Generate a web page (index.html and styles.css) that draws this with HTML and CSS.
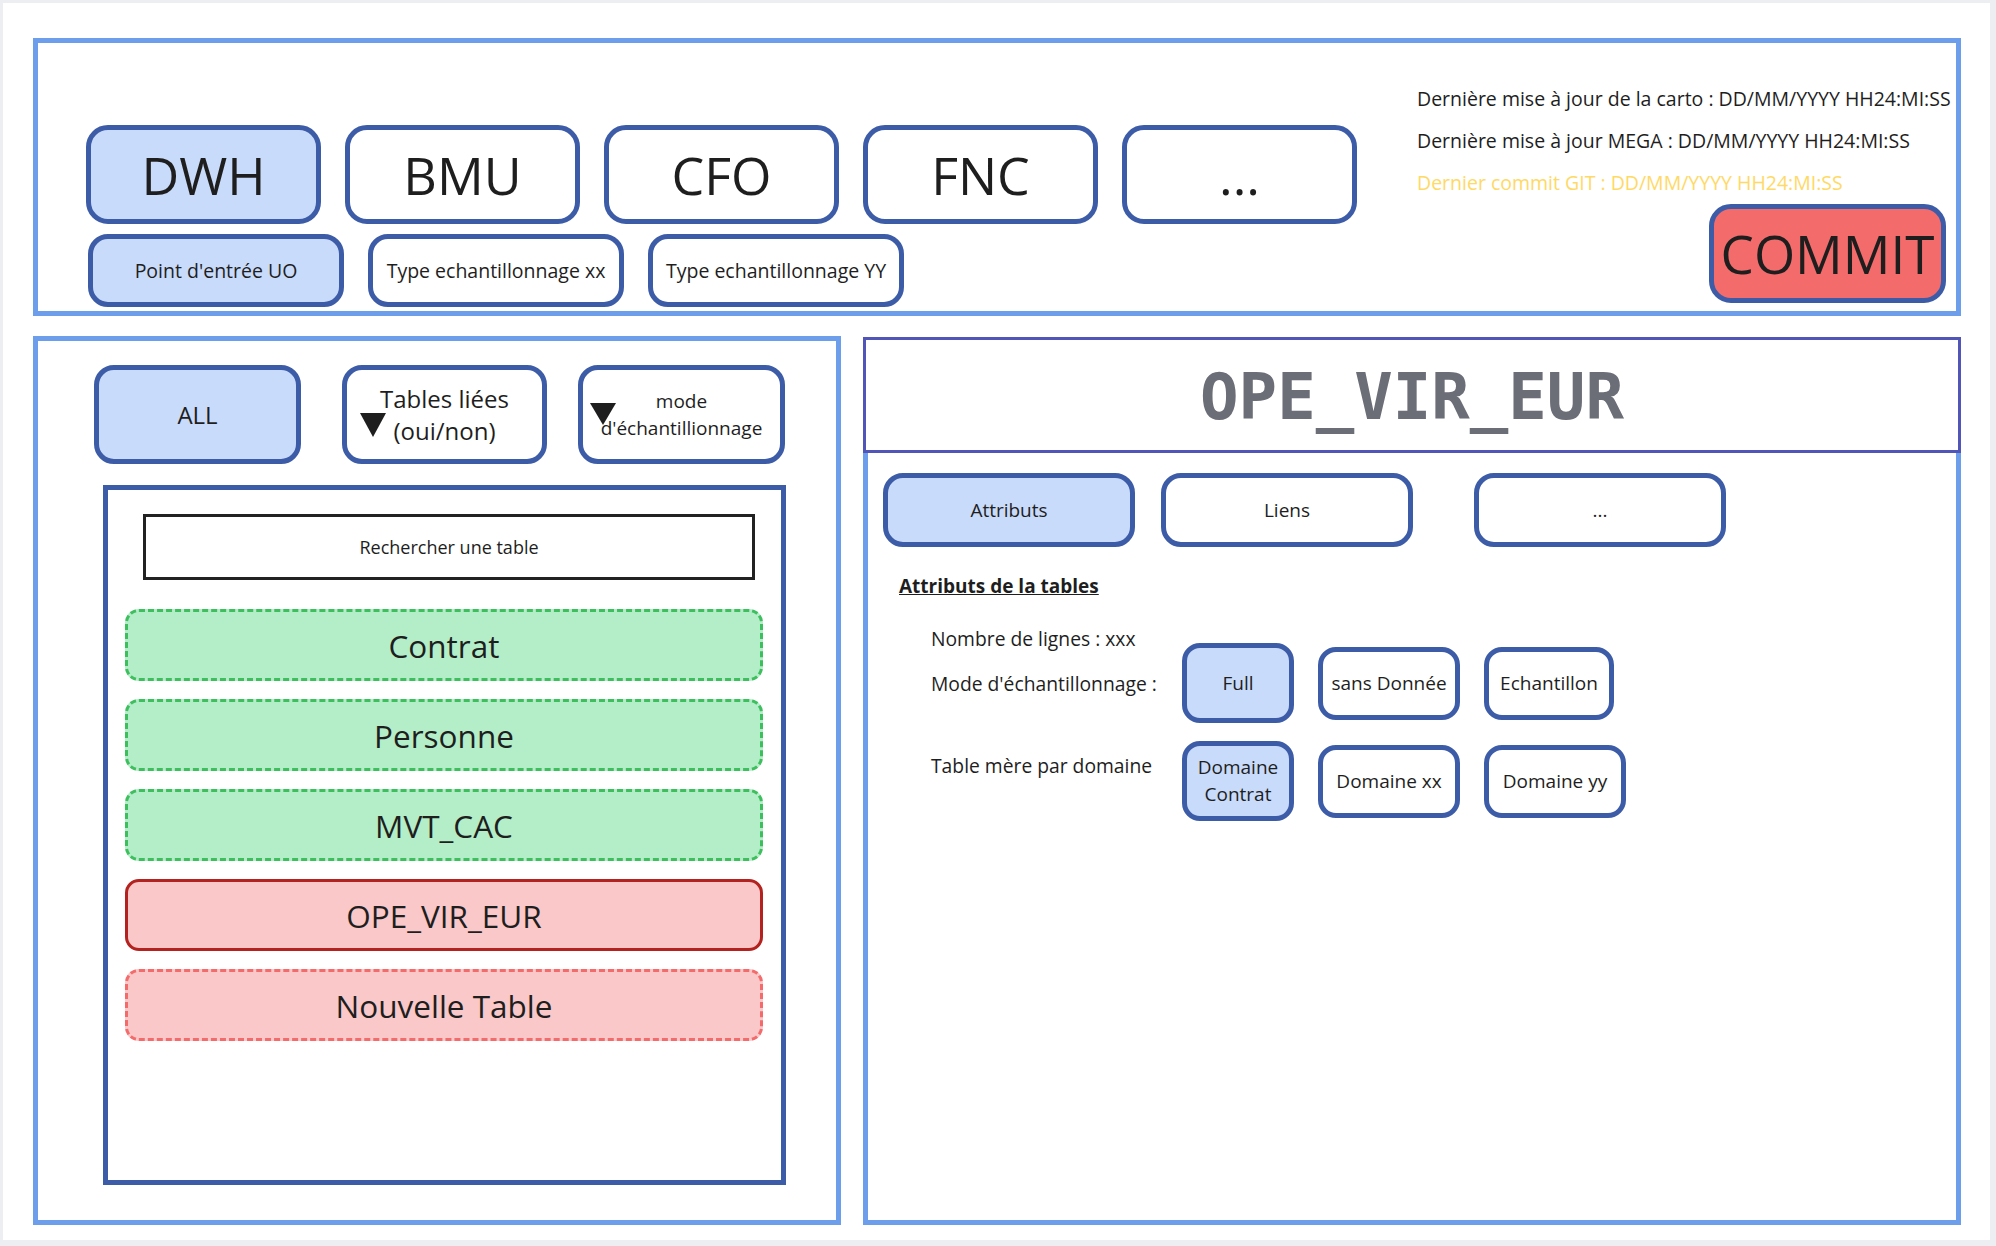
FILE: index.html
```html
<!DOCTYPE html>
<html lang="fr">
<head>
<meta charset="utf-8">
<title>Cartographie</title>
<link rel="stylesheet" href="styles.css">
</head>
<body>
<div class="canvas">
  <header class="top">
    <div class="domains">
      <div class="brow">
        <div class="btn dom on">DWH</div>
        <div class="btn dom">BMU</div>
        <div class="btn dom">CFO</div>
        <div class="btn dom">FNC</div>
        <div class="btn dom">...</div>
      </div>
      <div class="srow">
        <div class="btn sub on">Point d'entrée UO</div>
        <div class="btn sub">Type echantillonnage xx</div>
        <div class="btn sub">Type echantillonnage YY</div>
      </div>
    </div>
    <div class="status">
      <p>Dernière mise à jour de la carto : DD/MM/YYYY HH24:MI:SS</p>
      <p>Dernière mise à jour MEGA : DD/MM/YYYY HH24:MI:SS</p>
      <p class="git">Dernier commit GIT : DD/MM/YYYY HH24:MI:SS</p>
      <div class="btn commit">COMMIT</div>
    </div>
  </header>

  <div class="main">
    <section class="left">
      <div class="filters">
        <div class="btn filt on">ALL</div>
        <div class="btn filt tables"><span class="tri"></span>Tables liées<br>(oui/non)</div>
        <div class="btn filt mode"><span class="tri"></span>mode<br>d'échantillionnage</div>
      </div>
      <div class="listbox">
        <div class="search">Rechercher une table</div>
        <div class="items">
          <div class="item">Contrat</div>
          <div class="item">Personne</div>
          <div class="item">MVT_CAC</div>
          <div class="item sel">OPE_VIR_EUR</div>
          <div class="item new">Nouvelle Table</div>
        </div>
      </div>
    </section>

    <section class="right">
      <div class="head">OPE_VIR_EUR</div>
      <div class="detail">
        <div class="tabs">
          <div class="btn tab on">Attributs</div>
          <div class="btn tab">Liens</div>
          <div class="btn tab more">...</div>
        </div>
        <div class="attr-title">Attributs de la tables</div>
        <div class="attrs">
          <div class="arow">
            <div class="labels">Nombre de lignes : xxx<br>Mode d'échantillonnage :</div>
            <div class="opts">
              <div class="btn opt on">Full</div>
              <div class="btn opt">sans Donnée</div>
              <div class="btn opt ech">Echantillon</div>
            </div>
          </div>
          <div class="arow arow2">
            <div class="labels">Table mère par domaine</div>
            <div class="opts">
              <div class="btn opt on">Domaine<br>Contrat</div>
              <div class="btn opt">Domaine xx</div>
              <div class="btn opt">Domaine yy</div>
            </div>
          </div>
        </div>
      </div>
    </section>
  </div>
</div>
</body>
</html>
```

FILE: styles.css
```css
* { box-sizing: border-box; }
html, body { margin: 0; padding: 0; }
body {
  background: #eceef1;
  font-family: "Open Sans", "Noto Sans", sans-serif;
  color: #1e1e1e;
  width: 1996px;
  height: 1246px;
  overflow: hidden;
}
.canvas {
  margin: 3px 0 0 3px;
  width: 1987px;
  height: 1237px;
  background: #fff;
  padding: 35px 0 0 30px;
}

/* generic rounded button */
.btn {
  display: flex;
  align-items: center;
  justify-content: center;
  text-align: center;
  border: 5px solid #3d5ca8;
  border-radius: 22px;
  background: #fff;
}
.btn.on { background: #c9dbfa; }

/* top panel */
.top {
  width: 1928px;
  height: 278px;
  border: 5px solid #6d9eeb;
  display: flex;
  justify-content: space-between;
}
.domains { padding: 82px 0 0 48px; }
.brow { display: flex; gap: 24px; }
.dom { width: 235px; height: 99px; font-size: 52px; }
.srow { display: flex; gap: 24px; margin-top: 10px; padding-left: 2px; }
.sub { width: 256px; height: 73px; font-size: 19.5px; border-radius: 20px; }
.status {
  width: 539px;
  padding-top: 35px;
  display: flex;
  flex-direction: column;
  align-items: flex-start;
}
.status p { margin: 0; font-size: 19.5px; line-height: 42px; white-space: nowrap; }
.status .git { color: #ffd966; }
.commit {
  align-self: flex-end;
  margin-right: 10px;
  width: 237px;
  height: 99px;
  background: #f46b6b;
  font-size: 53px;
  white-space: nowrap;
}

/* main area */
.main { display: flex; gap: 22px; margin-top: 20px; }

.left {
  width: 808px;
  height: 889px;
  border: 5px solid #6d9eeb;
}
.filters { display: flex; margin-left: 56px; padding-top: 24px; }
.filt { width: 207px; height: 99px; font-size: 24px; border-radius: 20px; position: relative; }
.filt.tables { width: 205px; margin-left: 41px; line-height: 32px; }
.filt.mode { margin-left: 31px; font-size: 19px; line-height: 27px; }
.tri {
  position: absolute;
  width: 0;
  height: 0;
  border-left: 13px solid transparent;
  border-right: 13px solid transparent;
  border-top: 24px solid #1e1e1e;
}
.tables .tri { left: 13px; top: 43px; }
.mode .tri { left: 7px; top: 33px; border-top-width: 22px; }

.listbox {
  margin: 21px 0 0 65px;
  width: 683px;
  height: 700px;
  border: 5px solid #3d5ca8;
  padding-top: 24px;
}
.search {
  margin-left: 35px;
  width: 612px;
  height: 66px;
  border: 3px solid #222;
  display: flex;
  align-items: center;
  justify-content: center;
  font-size: 18px;
}
.items { display: flex; flex-direction: column; gap: 18px; margin: 29px 0 0 17px; }
.item {
  width: 638px;
  height: 72px;
  border-radius: 14px;
  display: flex;
  align-items: center;
  justify-content: center;
  font-size: 31.5px;
  border: 3px dashed #3dbf5e;
  background: #b4eec8;
}
.item.sel { border: 3px solid #b3221f; background: #fac8c8; }
.item.new { border: 3px dashed #f36b6b; background: #fac8c8; }

/* right panel */
.right {
  width: 1098px;
  height: 888px;
  margin-top: 1px;
  display: flex;
  flex-direction: column;
}
.head {
  height: 116px;
  border: 3px solid #5155b8;
  display: flex;
  align-items: center;
  justify-content: center;
  font-family: "DejaVu Sans Mono", monospace;
  font-weight: bold;
  font-size: 64px;
  color: #6b6d77;
  padding-top: 4px;
}
.detail {
  flex: 1;
  border: 5px solid #6d9eeb;
  border-top: none;
  padding: 20px 0 0 15px;
}
.tabs { display: flex; }
.tab { width: 252px; height: 74px; font-size: 19px; border-radius: 20px; }
.tab + .tab { margin-left: 26px; }
.tab.more { margin-left: 61px; }
.attr-title {
  margin: 26px 0 0 16px;
  font-size: 19px;
  font-weight: bold;
  text-decoration: underline;
  line-height: 26px;
}
.attrs { margin: 17px 0 0 48px; }
.arow { display: flex; align-items: flex-start; }
.labels { width: 251px; font-size: 19.3px; line-height: 45px; white-space: nowrap; }
.opts { display: flex; align-items: center; gap: 24px; margin-top: 27px; }
.opt { width: 142px; height: 73px; font-size: 19px; line-height: 27px; border-radius: 18px; }
.opt.on { width: 112px; height: 80px; }
.opt.ech { width: 130px; }
.arow2 { margin-top: 18px; }
.arow2 .labels { line-height: 27px; padding-top: 11px; }
.arow2 .opts { margin-top: 0; }
```
